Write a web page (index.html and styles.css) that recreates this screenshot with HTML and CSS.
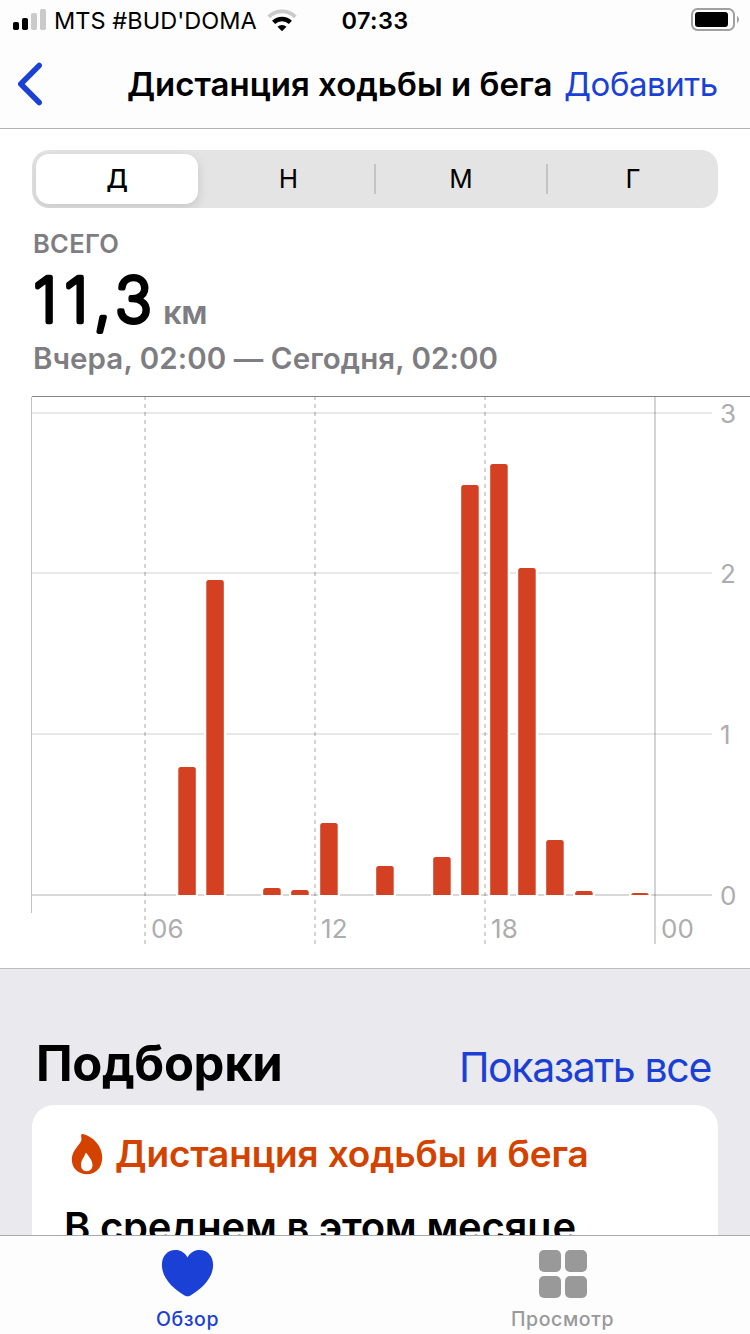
FILE: index.html
```html
<!DOCTYPE html>
<html lang="ru">
<head>
<meta charset="utf-8">
<title>Дистанция ходьбы и бега</title>
<link rel="stylesheet" href="styles.css">
</head>
<body>
<div class="screen">
  <header class="status">
    <svg class="signal" width="34" height="22" viewBox="0 0 34 22">
      <rect x="0" y="13" width="6" height="8" rx="1.8"/>
      <rect x="9" y="9" width="6" height="12" rx="1.8"/>
      <rect class="off" x="18" y="4" width="6" height="17" rx="1.8"/>
      <rect class="off" x="27" y="0" width="6" height="21" rx="1.8"/>
    </svg>
    <span class="carrier">MTS #BUD'DOMA</span>
    <svg class="wifi" width="30" height="23" viewBox="0 0 30 23">
      <path class="arc off" d="M1.700 7.900a19 19 0 0 1 26.600 0"/>
      <path class="arc inner" d="M6.600 13.400a12 12 0 0 1 16.800 0"/>
      <path d="M15 22.300l-4.500-4.600a6.500 6.500 0 0 1 9 0z"/>
    </svg>
    <span class="time">07:33</span>
    <svg class="battery" width="48" height="24" viewBox="0 0 48 24">
      <rect class="case" x="1" y="1" width="42" height="21" rx="5.500"/>
      <rect x="4" y="4" width="33" height="15" rx="3"/>
      <path class="cap" d="M46 8c2.600 1.200 2.600 5.800 0 7z"/>
    </svg>
  </header>

  <nav class="navbar">
    <svg class="back" width="27" height="44" viewBox="0 0 27 44"><path d="M23.200 3.500L4.800 22l18.400 18.500"/></svg>
    <h1 class="nav-title">Дистанция ходьбы и бега</h1>
    <a class="nav-action">Добавить</a>
  </nav>

  <main class="content">
    <div class="segments">
      <div class="segment active">Д</div>
      <div class="segment">Н</div>
      <div class="segment divided">М</div>
      <div class="segment divided">Г</div>
    </div>
    <section class="summary">
      <div class="label">ВСЕГО</div>
      <div class="value">
        <svg class="number" width="130" height="80" viewBox="0 0 130 80"><text x="0.500 31.500 61 82" y="54">11,3</text></svg>
        <span class="unit">км</span>
      </div>
      <div class="range">Вчера, 02:00 — Сегодня, 02:00</div>
    </section>
    <svg class="chart" width="750" height="572" viewBox="0 396 750 572">
      <g class="grid">
        <path d="M32 413H712M32 573H712M32 734H712"/>
        <path class="zero" d="M32 895H712"/>
      </g>
      <g class="halo">
        <path d="M176 764h22v132h-22zM204 577h22v319h-22zM261 886h22v10h-22zM289 888h22v8h-22zM318 820h22v76h-22zM374 863h22v33h-22zM431 854h22v42h-22zM459 482h22v414h-22zM488 461h22v435h-22zM516 565h22v331h-22zM544 837h22v59h-22zM573 888h22v8h-22zM629 891h22v5h-22z"/>
      </g>
      <g class="hours">
        <path class="dashed" d="M145 396V944M315 396V944M485 396V944"/>
        <path d="M655 396V944"/>
      </g>
      <path class="edge" d="M31.500 397V913"/>
      <path class="top" d="M32 396.500H750"/>
      <g class="bars">
        <path d="M178.300 895v-125.500q0-2.500 2.500-2.500h12.500q2.500 0 2.500 2.500V895z"/>
        <path d="M206.300 895V582.500q0-2.500 2.500-2.500h12.500q2.500 0 2.500 2.500V895z"/>
        <path d="M263.200 895v-4.500q0-2.500 2.500-2.500h12.500q2.500 0 2.500 2.500V895z"/>
        <path d="M291.200 895v-2.500q0-2.500 2.500-2.500h12.500q2.500 0 2.500 2.500V895z"/>
        <path d="M320.200 895V825.500q0-2.500 2.500-2.500h12.500q2.500 0 2.500 2.500V895z"/>
        <path d="M376.200 895V868.500q0-2.500 2.500-2.500h12.500q2.500 0 2.500 2.500V895z"/>
        <path d="M433.200 895V859.500q0-2.500 2.500-2.500h12.500q2.500 0 2.500 2.500V895z"/>
        <path d="M461.200 895V487.500q0-2.500 2.500-2.500h12.500q2.500 0 2.500 2.500V895z"/>
        <path d="M490.200 895V466.500q0-2.500 2.500-2.500h12.500q2.500 0 2.500 2.500V895z"/>
        <path d="M518.200 895V570.500q0-2.500 2.500-2.500h12.500q2.500 0 2.500 2.500V895z"/>
        <path d="M546.200 895V842.500q0-2.500 2.500-2.500h12.500q2.500 0 2.500 2.500V895z"/>
        <path d="M575.200 895v-1.500q0-2.500 2.500-2.500h12.500q2.500 0 2.500 2.500V895z"/>
        <path d="M631.200 895q0-2 2.500-2h12.500q2.500 0 2.500 2z"/>
      </g>
      <g class="axis">
        <text x="720" y="423">3</text>
        <text x="720" y="583">2</text>
        <text x="720" y="744">1</text>
        <text x="720" y="905">0</text>
        <text x="151" y="938">06</text>
        <text x="321" y="938">12</text>
        <text x="491" y="938">18</text>
        <text x="661" y="938">00</text>
      </g>
    </svg>
  </main>

  <section class="highlights">
    <div class="section-head">
      <h2 class="section-title">Подборки</h2>
      <a class="show-all">Показать все</a>
    </div>
    <article class="card">
      <div class="card-head">
        <svg class="flame" width="32" height="42" viewBox="0 0 32 42">
          <path d="M10.200 3.400C9.700 1.600 10.800.700 12.700 1.200 22.500 4 31.200 13 31.200 24.500 31.200 34.500 25 41.200 16 41.200S.800 35 .800 26.500C.800 18.500 6.500 14 9.500 9.200Q11 6.500 10.200 3.400z"/>
          <path class="core" d="M14.400 20.300q.8-.8 1.500.2C17.500 23.500 21.500 27 21.500 32c0 4-2.400 6.200-5.800 6.200S10 36 10 32c0-5 3.300-7.500 4.400-11.700z"/>
        </svg>
        <span class="card-title">Дистанция ходьбы и бега</span>
      </div>
      <div class="card-text">В среднем в этом месяце</div>
    </article>
  </section>

  <footer class="tabs">
    <div class="tab selected">
      <svg width="54" height="50" viewBox="0.500 0 54 50"><path d="M27 9.500C29.500 4.500 34 2 39 2c8 0 13.600 6 13.600 15C52.600 31 40 41.500 29.500 47.700q-2.500 1.300-5 0C14 41.500 1.400 31 1.400 17 1.400 8 7 2 15 2c5 0 9.500 2.500 12 7.500z"/></svg>
      <span class="tab-label">Обзор</span>
    </div>
    <div class="tab">
      <svg width="48" height="50" viewBox="0 0 48 50"><rect y="2" width="22" height="22" rx="5"/><rect x="26" y="2" width="22" height="22" rx="5"/><rect y="28" width="22" height="22" rx="5"/><rect x="26" y="28" width="22" height="22" rx="5"/></svg>
      <span class="tab-label">Просмотр</span>
    </div>
  </footer>
</div>
</body>
</html>
```
FILE: styles.css
```css
* { box-sizing: border-box; }
body { margin: 0; background: #fff; color: #000; font-family: Inter, "Liberation Sans", sans-serif; }
h1, h2 { margin: 0; }
svg { display: block; flex: none; }
.screen { width: 750px; height: 1334px; display: flex; flex-direction: column; overflow: hidden; white-space: nowrap; }

.status { flex: none; height: 40px; display: flex; align-items: flex-start; padding: 9px 11px 0 13px; background: #fdfdfd; }
.off { fill: #cacaca; }
.carrier { margin-left: 7px; width: 205px; font-size: 23.500px; line-height: 24px; letter-spacing: 0.050px; }
.wifi { margin-left: 7.500px; }
.arc { fill: none; stroke: #000; stroke-width: 3.800px; }
.arc.off { stroke: #cacaca; }
.arc.inner { stroke-width: 4.400px; }
.time { margin-left: 45px; font-size: 23.500px; line-height: 24px; font-weight: 600; letter-spacing: 0.400px; }
.battery { margin-left: auto; margin-top: -1px; }
.case { fill: none; stroke: #a0a0a0; stroke-width: 2px; }
.cap { fill: #a0a0a0; }

.navbar { flex: none; height: 89px; display: flex; align-items: center; padding: 0 16px; border-bottom: 1px solid #b2b2b2; background: #fdfdfd; }
.back path { fill: none; stroke: #1a40d6; stroke-width: 5.500px; stroke-linecap: round; stroke-linejoin: round; }
.nav-title { margin-left: 84px; width: 437px; font-size: 33px; font-weight: 600; line-height: 40px; }
.nav-action { font-size: 33px; line-height: 40px; letter-spacing: -0.450px; color: #1a40d6; }

.content { flex: none; height: 840px; padding-top: 21px; border-bottom: 1px solid #bdbdbf; }
.segments { height: 58px; margin: 0 32px; display: grid; grid-template-columns: 171px 171px 172px 172px; grid-template-rows: 58px; border-radius: 17px; background: #e4e4e4; }
.segment { display: flex; align-items: center; justify-content: center; font-size: 26px; font-weight: 400; line-height: 50px; }
.segment.active { margin: 4px 5px 4px 4px; border-radius: 13px; background: #fff; box-shadow: 0 4px 12px rgba(0,0,0,.13); font-weight: 500; clip-path: inset(-4px -20px -4px -4px round 17px); }
.divided { padding-left: 2px; background: linear-gradient(#c4c4c4, #c4c4c4) 0 50% / 2px 30px no-repeat; }
.summary { height: 188px; padding: 20px 33px 0; color: #7d7d82; font-weight: 600; }
.label { font-size: 25.500px; line-height: 32px; letter-spacing: 0.300px; }
.value { display: flex; height: 64px; margin-top: 8px; }
.number text { font-size: 62px; font-weight: 200; stroke: #000; stroke-width: 4.600px; stroke-linejoin: round; }
.unit { font-size: 33px; line-height: 88px; letter-spacing: -0.500px; }
.range { font-size: 29.500px; line-height: 36px; margin-top: 8px; letter-spacing: 0.070px; }

.chart path { fill: none; stroke-width: 2px; }
.grid { stroke: #e8e8e8; }
.chart .zero { stroke: #d8d8d8; }
.chart .halo path { fill: #fff; }
.hours { stroke: rgba(0,0,0,.17); }
.dashed { stroke-dasharray: 4px 4px; }
.chart .edge { stroke: #c0c0c2; stroke-width: 1px; }
.chart .top { stroke: #858585; stroke-width: 1px; }
.chart .bars path { fill: #d34122; }
.axis { fill: #adadad; font-size: 26px; font-weight: 400; letter-spacing: 0.200px; }

.highlights { flex: none; height: 266px; padding: 68px 32px 0; background: #eae9ee; overflow: hidden; }
.section-head { height: 68px; padding: 0 7px 0 4px; display: flex; justify-content: space-between; }
.section-title { font-size: 49px; font-weight: 700; line-height: 54px; letter-spacing: -0.350px; }
.show-all { font-size: 41px; line-height: 60px; letter-spacing: -1.350px; color: #1a40d6; }
.card { height: 200px; border-radius: 22px; background: #fff; padding: 28px 32px 0; }
.card-head { display: flex; align-items: flex-start; padding-left: 7px; height: 42px; }
.flame path { fill: #d44200; }
.flame .core { fill: #fff; }
.card-title { margin-left: 12px; font-size: 37px; line-height: 42px; font-weight: 600; letter-spacing: -0.150px; color: #d44200; }
.card-text { margin-top: 29px; font-size: 40px; line-height: 46px; font-weight: 600; letter-spacing: -0.220px; }

.tabs { flex: none; height: 99px; display: flex; background: #fdfdfd; border-top: 1px solid #a9a9ab; }
.tab { flex: 1; display: flex; flex-direction: column; align-items: center; padding-top: 12px; color: #999; fill: #999; }
.selected { color: #1a40d6; fill: #1a40d6; }
.tab-label { margin-top: 9px; font-size: 19.500px; line-height: 24px; font-weight: 500; letter-spacing: 0.600px; }
```
